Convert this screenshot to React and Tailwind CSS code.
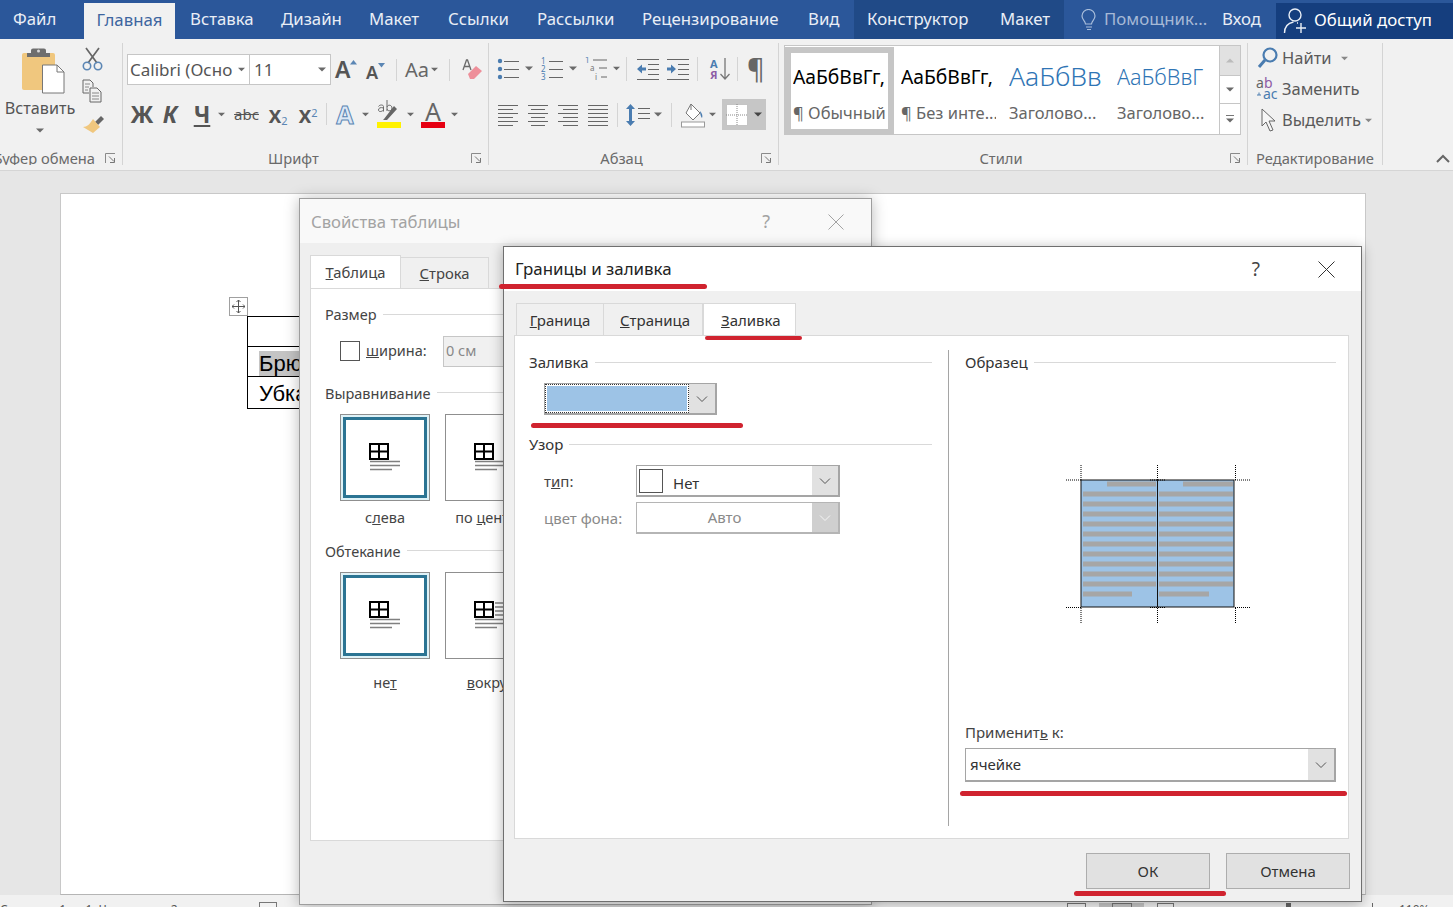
import React from "react";

const Caret = ({ c = "#6a6a6a", w = 8 }) => (
  <svg width={w} height="5" viewBox="0 0 8 5" className="shrink-0"><path d="M0 0.5h8L4 4.5z" fill={c} /></svg>
);
const Chev = ({ c = "#555" }) => (
  <svg width="12" height="8" viewBox="0 0 12 8"><path d="M1 1.5l5 5 5-5" fill="none" stroke={c} strokeWidth="1" /></svg>
);
const Launcher = () => (
  <svg width="11" height="11" viewBox="0 0 11 11" className="shrink-0"><path d="M0.5 10V0.5H10" fill="none" stroke="#8a8a8a" /><path d="M4 3.5l5 5M9.5 5v4.5H5" fill="none" stroke="#777" /></svg>
);
const Sep = ({ h = 25, ml = 0, mr = 0 }) => (
  <div className="w-px bg-[#d4d4d4] shrink-0" style={{ height: h, marginLeft: ml, marginRight: mr }} />
);

function GroupLabel({ children }) {
  return (
    <div className="mt-auto h-[14px] flex items-center text-[14.7px] text-[#6a6a6a] leading-none">
      <span className="flex-1 text-center whitespace-nowrap">{children}</span>
      <span className="w-[24px] flex items-center justify-end pr-[6px]"><Launcher /></span>
    </div>
  );
}

function TabBar() {
  return (
    <div className="h-[39px] bg-[#2b579a] flex text-[16.8px] text-[#e9eef6] leading-none whitespace-nowrap">
      <div className="w-[84px] pl-[13px] flex items-center">Файл</div>
      <div className="w-[91px] mt-[3px] bg-[#f1f1f1] text-[#3d659f] flex items-center justify-center pb-[1px]">Главная</div>
      <div className="w-[15px]" />
      {[["Вставка", 91], ["Дизайн", 88], ["Макет", 79], ["Ссылки", 89], ["Рассылки", 105], ["Рецензирование", 166], ["Вид", 46]].map(([t, w]) => (
        <div key={t} className="flex items-center" style={{ width: w }}>{t}</div>
      ))}
      <div className="w-[210px] bg-[#204a87] flex items-center pl-[13px]">
        <span className="w-[133px]">Конструктор</span><span>Макет</span>
      </div>
      <div className="w-[17px]" />
      <svg width="16" height="24" viewBox="0 0 16 24" className="mt-[9px] mr-[7px]"><path d="M4.5 15c0-3-3.5-4-3.500-8a6.500 6.500 0 0 1 13 0c0 4-3.500 5-3.500 8z" fill="none" stroke="#a9bedb" strokeWidth="1.200" /><path d="M5 18h6M6 20.500h4" stroke="#a9bedb" strokeWidth="1.200" /></svg>
      <div className="w-[118px] text-[#a6b9d6] flex items-center">Помощник...</div>
      <div className="w-[54px] flex items-center">Вход</div>
      <div className="flex-1 mt-[3px] bg-[#153e7e] flex items-center pl-[7px] pb-[1px] text-white">
        <svg width="26" height="28" viewBox="0 0 26 28" className="mr-[5px]"><circle cx="12" cy="8" r="6" fill="none" stroke="#e9eef6" strokeWidth="1.400" /><path d="M1.500 26c0-7 4-10 9-11M14 16h1" fill="none" stroke="#e9eef6" strokeWidth="1.400" /><path d="M18 16v10M13 21h10" stroke="#e9eef6" strokeWidth="1.400" /></svg>
        Общий доступ
      </div>
    </div>
  );
}

function Clipboard() {
  return (
    <div className="w-[123px] shrink-0 border-r border-[#d4d4d4] flex flex-col overflow-hidden">
      <div className="flex">
        <div className="w-[80px] flex flex-col items-center pt-[5px]">
          <svg width="44" height="46" viewBox="0 0 44 46" className="ml-[6px]">
            <rect x="1" y="5" width="33" height="37" rx="2" fill="#f0c77e" />
            <path d="M10 5V2.500a2 2 0 0 1 2-2h11a2 2 0 0 1 2 2V5h4v4H6V5z" fill="#6e6e6e" />
            <circle cx="17.500" cy="3" r="1.500" fill="#d9d9d9" />
            <path d="M21.500 17H36l7 7v21H21.500z" fill="#fff" stroke="#777" />
            <path d="M36 17v7h7" fill="none" stroke="#777" />
          </svg>
          <div className="text-[16.2px] leading-none text-[#555] mt-[6px]">Вставить</div>
          <div className="mt-[12px]"><Caret /></div>
        </div>
        <div className="flex flex-col pl-[1px] pt-[4px]">
          <svg width="24" height="24" viewBox="0 0 24 24"><path d="M5 1l11 15M18 1L7 16" stroke="#666" strokeWidth="1.700" fill="none" /><circle cx="6" cy="19" r="3.700" fill="none" stroke="#5b86b4" strokeWidth="1.600" /><circle cx="17" cy="19" r="3.700" fill="none" stroke="#5b86b4" strokeWidth="1.600" /></svg>
          <svg width="24" height="24" viewBox="0 0 24 24" className="mt-[8px]"><path d="M2 1h7l3 3v4M2 1v13h6" fill="none" stroke="#666" /><path d="M4 5h5M4 8h4M4 11h3" stroke="#888" /><path d="M9 9h7l4 4v10H9z" fill="#f1f1f1" stroke="#666" /><path d="M11 14h7M11 17h7M11 20h7" stroke="#888" /></svg>
          <svg width="24" height="24" viewBox="0 0 24 24" className="mt-[9px]"><path d="M14 10l6-6 3 3-6 6z" fill="#666" /><path d="M12 7l7 8-7 6-10-6c4 0 7-3 10-8z" fill="#f0c77e" /></svg>
        </div>
      </div>
      <div className="mt-auto h-[14px] flex items-center justify-end text-[14.7px] leading-none text-[#6a6a6a] pr-[6px] gap-[10px] whitespace-nowrap">
        <span className="shrink-0">Буфер обмена</span><Launcher />
      </div>
    </div>
  );
}

function FontGroup() {
  return (
    <div className="w-[366px] shrink-0 border-r border-[#d4d4d4] flex flex-col">
      <div className="pl-[4px] pt-[11px] flex items-center h-[42px]">
        <div className="w-[123px] h-[31px] bg-white border border-[#c6c6c6] flex items-center pl-[2px] pr-[4px] justify-between text-[17px] text-[#555] whitespace-nowrap overflow-hidden">
          <span className="pt-[1px]">Calibri (Осно</span><Caret w={7} />
        </div>
        <div className="w-[81px] h-[31px] bg-white border border-[#c6c6c6] border-l-0 flex items-center pl-[4px] pr-[4px] justify-between text-[17px] text-[#555]">
          <span className="pt-[1px]">11</span><Caret />
        </div>
        <div className="w-[32px] ml-[4px] text-[23px] font-semibold text-[#555] leading-none flex items-end">A<svg width="8" height="5" className="mb-[16px]" viewBox="0 0 8 5"><path d="M0 4.500h7L3.500 0z" fill="#5b86b4" /></svg></div>
        <div className="w-[25px] text-[18px] font-semibold text-[#555] leading-none flex items-end ml-[-1px] mt-[4px]">A<svg width="8" height="5" viewBox="0 0 8 5" className="mb-[13px]"><path d="M0 0h7L3.500 4.500z" fill="#5b86b4" /></svg></div>
        <Sep h={22} ml={5} mr={8} />
        <div className="flex items-center gap-[2px] text-[20px] text-[#666] w-[36px] leading-none">Aa<Caret w={7} /></div>
        <Sep h={22} ml={8} mr={12} />
        <svg width="22" height="22" viewBox="0 0 22 22"><path d="M1 11L4.500 1h1L9 11M2.500 7.500h5" fill="none" stroke="#6a6a6a" strokeWidth="1.300" /><path d="M6 15l8-8 6 5-8 8H8z" fill="#ee8f9a" /></svg>
      </div>
      <div className="pl-[4px] mt-[14px] flex items-center h-[30px] text-[#555]">
        <span className="w-[30px] text-center text-[23px] font-bold leading-none">Ж</span>
        <span className="w-[26px] text-center text-[23px] font-bold italic leading-none">К</span>
        <span className="w-[38px] text-center text-[23px] font-bold leading-none underline decoration-[1.5px] underline-offset-[2px]">Ч</span>
        <span className="-ml-[3px] mr-[9px]"><Caret w={7} /></span>
        <span className="w-[25px] text-center text-[15px] line-through leading-none">abc</span>
        <span className="w-[34px] ml-[2px] text-[23px] font-semibold leading-none text-center">x<sub className="text-[11px] font-normal text-[#5b86b4]">2</sub></span>
        <span className="w-[26px] text-[23px] font-semibold leading-none text-center">x<sup className="text-[11px] font-normal text-[#5b86b4]">2</sup></span>
        <Sep h={22} ml={5} mr={8} />
        <span className="w-[20px] text-center text-[25px] leading-none text-[#dbe8f6] [-webkit-text-stroke:1px_#5b86b4] font-bold">A</span>
        <span className="ml-[7px] mr-[8px]"><Caret w={7} /></span>
        <div className="flex flex-col items-center w-[24px]">
          <svg width="24" height="22" viewBox="0 0 24 22"><path d="M1.500 6.500c1-2 5-2 5 0v5M6.500 8c-3-1-5 0-5 2s3 2 5 0M10 0v11M10 7c1-3 5-2 5 1s-4 4-5 1" fill="none" stroke="#6a6a6a" /><path d="M7 19l10-13 3 3-10 11H6z" fill="#666" /></svg>
          <div className="w-[24px] h-[6px] bg-[#fff200]" />
        </div>
        <span className="ml-[6px] mr-[7px]"><Caret w={7} /></span>
        <div className="flex flex-col items-center w-[24px]">
          <span className="text-[25px] leading-[22px] text-[#666]">A</span>
          <div className="w-[24px] h-[6px] bg-[#e60012]" />
        </div>
        <span className="ml-[6px]"><Caret w={7} /></span>
      </div>
      <GroupLabel>Шрифт</GroupLabel>
    </div>
  );
}

function ParagraphGroup() {
  const dash = (ys, x, w) => ys.map((y) => <rect key={y} x={x} y={y} width={w} height="1" fill="#666" />);
  return (
    <div className="w-[290px] shrink-0 border-r border-[#d4d4d4] flex flex-col">
      <div className="pl-[8px] pt-[10px] flex items-center h-[41px]">
        <svg width="22" height="24" viewBox="0 0 22 24"><circle cx="3" cy="4" r="2.200" fill="#4a7cb0" /><circle cx="3" cy="12" r="2.200" fill="#4a7cb0" /><circle cx="3" cy="20" r="2.200" fill="#4a7cb0" />{dash([4, 12, 20], 7, 15)}</svg>
        <span className="ml-[6px] mr-[8px]"><Caret /></span>
        <svg width="22" height="24" viewBox="0 0 22 24"><g fontSize="8" fill="#4a7cb0" fontFamily="Noto Sans"><text x="0" y="7">1</text><text x="0" y="15">2</text><text x="0" y="23">3</text></g>{dash([4, 12, 20], 8, 14)}</svg>
        <span className="ml-[6px] mr-[8px]"><Caret /></span>
        <svg width="24" height="24" viewBox="0 0 24 24"><g fontSize="8" fill="#4a7cb0" fontFamily="Noto Sans"><text x="0" y="6">1</text><text x="5" y="14" fill="#777">a</text><text x="10" y="23" fill="#777">i</text></g><path d="M8 3h14M14 11h8M16 20h6" stroke="#666" /></svg>
        <span className="ml-[4px] mr-[6px]"><Caret w={7} /></span>
        <Sep h={24} mr={10} />
        <svg width="23" height="24" viewBox="0 0 23 24">{dash([2, 22], 0, 22)}{dash([7, 12, 17], 11, 11)}<path d="M0 12l5-4.500v3h4v3H5v3z" fill="#4a7cb0" /></svg>
        <svg width="23" height="24" viewBox="0 0 23 24" className="ml-[7px]">{dash([2, 22], 0, 22)}{dash([7, 12, 17], 11, 11)}<path d="M9 12L4 7.500v3H0v3h4v3z" fill="#4a7cb0" /></svg>
        <Sep h={24} ml={7} mr={11} />
        <svg width="22" height="24" viewBox="0 0 22 24"><text x="1" y="11" fontSize="11" fontWeight="700" fill="#4a7cb0" fontFamily="Noto Sans">А</text><text x="1" y="22" fontSize="11" fontWeight="700" fill="#8d5ca6" fontFamily="Noto Sans">Я</text><path d="M16 1v21M11.500 17l4.500 5 4.500-5" fill="none" stroke="#777" strokeWidth="1.300" /></svg>
        <Sep h={24} ml={6} mr={9} />
        <span className="text-[27px] leading-none text-[#666]">¶</span>
      </div>
      <div className="pl-[9px] mt-[15px] flex items-center h-[31px]">
        <svg width="20" height="24" viewBox="0 0 20 24">{[2, 6, 10, 14, 18, 22].map((y, i) => <rect key={y} x="0" y={y} width={i % 2 ? 15 : 20} height="1" fill="#666" />)}</svg>
        <svg width="20" height="24" viewBox="0 0 20 24" className="ml-[10px]">{[2, 6, 10, 14, 18, 22].map((y, i) => <rect key={y} x={i % 2 ? 3 : 0} y={y} width={i % 2 ? 14 : 20} height="1" fill="#666" />)}</svg>
        <svg width="20" height="24" viewBox="0 0 20 24" className="ml-[10px]">{[2, 6, 10, 14, 18, 22].map((y, i) => <rect key={y} x={i % 2 ? 5 : 0} y={y} width={i % 2 ? 15 : 20} height="1" fill="#666" />)}</svg>
        <svg width="20" height="24" viewBox="0 0 20 24" className="ml-[10px]">{[2, 6, 10, 14, 18, 22].map((y) => <rect key={y} x="0" y={y} width="20" height="1" fill="#666" />)}</svg>
        <Sep h={24} ml={9} mr={8} />
        <svg width="24" height="24" viewBox="0 0 24 24"><path d="M4.500 1l4.500 5H6v12h3l-4.500 5L0 18h3V6H0z" fill="#4a7cb0" />{dash([5, 10, 15], 12, 12)}</svg>
        <span className="ml-[4px] mr-[9px]"><Caret /></span>
        <Sep h={24} mr={9} />
        <svg width="24" height="26" viewBox="0 0 24 26"><path d="M10 2l9 9-7 7-7-7z" fill="#fff" stroke="#777" /><path d="M10 2v6" stroke="#777" /><path d="M19 9c2 2 3 5 2 7-1-1-2-4-2-7z" fill="#4a7cb0" /><rect x="0.500" y="20" width="23" height="5" fill="#fff" stroke="#999" /></svg>
        <span className="ml-[4px] mr-[6px]"><Caret w={7} /></span>
        <div className="w-[44px] h-[31px] bg-[#c6c6c6] flex items-center pl-[4px] gap-[6px]">
          <svg width="22" height="22" viewBox="0 0 22 22"><rect x="0" y="0" width="22" height="22" fill="#fff" /><path d="M0.500 0.500h21v21h-21zM11 0v22M0 11h22" fill="none" stroke="#888" strokeDasharray="1 1" /></svg>
          <Caret c="#444" />
        </div>
      </div>
      <GroupLabel>Абзац</GroupLabel>
    </div>
  );
}

function StyleItem({ sample, name, cls, wrap }) {
  return (
    <div className={wrap}>
      <div className={`h-[44px] flex items-center overflow-hidden whitespace-nowrap leading-none pt-[1px] ${cls}`}>{sample}</div>
      <div className="text-[16.5px] leading-none text-[#666] whitespace-nowrap mt-[7px] overflow-hidden">{name}</div>
    </div>
  );
}

function StylesGroup() {
  return (
    <div className="w-[469px] shrink-0 border-r border-[#d4d4d4] flex flex-col">
      <div className="pl-[5px] pt-[2px]">
        <div className="w-[457px] h-[90px] bg-white border border-[#c6c6c6] flex">
          <div className="w-[109px] h-[88px] border-[6px] border-[#c6c6c6] pl-[2px] pt-[1px] overflow-hidden -mr-[1px] mt-[1px]">
            <div className="h-[44px] flex items-center overflow-hidden whitespace-nowrap leading-none pt-[1px] text-[19.3px] text-black">АаБбВвГг,</div>
            <div className="text-[16.5px] leading-none text-[#666] whitespace-nowrap mt-[7px] overflow-hidden">¶ Обычный</div>
          </div>
          <StyleItem wrap="w-[95px] ml-[8px] pt-[8px] overflow-hidden" cls="text-[19.3px] text-black" sample="АаБбВвГг," name="¶ Без инте..." />
          <StyleItem wrap="w-[92px] ml-[13px] pt-[8px] overflow-hidden" cls="text-[26.5px] text-[#2f75b5] font-light" sample="АаБбВвГ" name="Заголово..." />
          <StyleItem wrap="w-[92px] ml-[16px] pt-[8px] overflow-hidden" cls="text-[21.5px] text-[#2f75b5] font-light" sample="АаБбВвГ" name="Заголово..." />
          <div className="w-[21px] ml-auto border-l border-[#c6c6c6] flex flex-col">
            <div className="h-[30px] bg-[#e1e1e1] border-b border-[#c6c6c6] flex items-center justify-center"><svg width="8" height="5" viewBox="0 0 8 5"><path d="M0 4.500h8L4 .5z" fill="#bbb" /></svg></div>
            <div className="h-[28px] border-b border-[#c6c6c6] flex items-center justify-center"><Caret /></div>
            <div className="flex-1 flex flex-col items-center justify-center gap-[2px]"><div className="w-[8px] h-px bg-[#777]" /><Caret /></div>
          </div>
        </div>
      </div>
      <GroupLabel>Стили</GroupLabel>
    </div>
  );
}

function EditGroup() {
  return (
    <div className="w-[135px] shrink-0 border-r border-[#d4d4d4] flex flex-col text-[16.500px] text-[#5a5a5a] leading-none">
      <div className="pl-[8px] pt-[4px] flex flex-col gap-[9px] whitespace-nowrap">
        <div className="flex items-center h-[22px]">
          <svg width="22" height="22" viewBox="0 0 22 22" className="ml-[1px] mr-[3px]"><circle cx="13" cy="8" r="6.500" fill="none" stroke="#4a7cb0" strokeWidth="2.200" /><path d="M8 13l-6 7" stroke="#4a7cb0" strokeWidth="3" /></svg>
          <span>Найти</span><span className="ml-[9px]"><Caret w={7} c="#888" /></span>
        </div>
        <div className="flex items-center h-[22px]">
          <svg width="26" height="26" viewBox="0 0 26 26"><text x="0" y="12" fontSize="14" fontFamily="Noto Sans" fill="#666">a</text><text x="8" y="12" fontSize="14" fontFamily="Noto Sans" fill="#8d5ca6">b</text><text x="7" y="23" fontSize="14" fontFamily="Noto Sans" fill="#4a7cb0">ac</text><path d="M1 19h4M3 16.500v2.500" stroke="#4a7cb0" /></svg>
          <span>Заменить</span>
        </div>
        <div className="flex items-center h-[22px]">
          <svg width="20" height="24" viewBox="0 0 20 24" className="ml-[4px] mr-[2px]"><path d="M2 1v17l4-4 4 9 3-1-4-9h6z" fill="#f6f6f6" stroke="#666" /></svg>
          <span>Выделить</span><span className="ml-[4px]"><Caret w={7} c="#888" /></span>
        </div>
      </div>
      <div className="mt-auto h-[14px] flex items-center justify-center text-[14.7px] text-[#6a6a6a] whitespace-nowrap">Редактирование</div>
    </div>
  );
}

function Ribbon() {
  return (
    <div className="h-[132px] bg-[#f1f1f1] border-b border-[#d5d5d5] flex pt-[4px] pb-[5px]">
      <Clipboard /><FontGroup /><ParagraphGroup /><StylesGroup /><EditGroup />
      <div className="flex-1 flex items-end justify-end pr-[3px] pb-[2px]">
        <svg width="14" height="9" viewBox="0 0 14 9"><path d="M1 8l6-6 6 6" fill="none" stroke="#666" strokeWidth="2" /></svg>
      </div>
    </div>
  );
}

function Document() {
  return (
    <div className="h-[724px] bg-[#e6e6e6] pt-[22px] pl-[60px]">
      <div className="w-[1306px] h-[702px] bg-white border border-[#c8c8c8] border-b-[#b5b5b5] pl-[168px] pt-[103px]">
        <div className="w-[19px] h-[19px] border border-[#a0a0a0] flex items-center justify-center">
          <svg width="13" height="13" viewBox="0 0 13 13"><path d="M6.500 0v13M0 6.500h13" stroke="#555" /><path d="M4.500 2l2-2 2 2M4.500 11l2 2 2-2M2 4.500l-2 2 2 2M11 4.500l2 2-2 2" fill="none" stroke="#555" /></svg>
        </div>
        <div className="ml-[18px] w-[200px] border border-black text-[22px] leading-none text-black" style={{ fontFamily: "'Liberation Sans', sans-serif" }}>
          <div className="h-[30px] border-b border-black" />
          <div className="h-[30px] border-b border-black pl-[11px] flex items-center pt-[4px]"><span className="bg-[#c4c4c4] h-[25px] flex items-center">Брюки</span></div>
          <div className="h-[31px] pl-[11px] flex items-center pt-[3px]">Убка</div>
        </div>
      </div>
    </div>
  );
}

function StatusBar() {
  return (
    <div className="h-[12px] bg-[#f1f1f1] flex items-start overflow-hidden text-[12px] leading-none text-[#555]">
      <span className="w-[259px] mt-[9px] whitespace-nowrap">Страница 1 из 1&nbsp;&nbsp;Число слов: 2</span>
      <div className="w-[18px] h-[8px] mt-[7px] border border-[#777]" />
      <div className="flex-1" />
      <div className="w-[19px] h-[8px] mt-[8px] border border-[#777]" />
      <div className="w-[45px] h-[8px] ml-[13px] mt-[8px] bg-[#c6c6c6] flex justify-center"><div className="w-[20px] h-[8px] border border-[#777]" /></div>
      <div className="w-[17px] h-[8px] ml-[13px] mt-[8px] border border-[#777]" />
      <div className="w-[5px] h-[8px] ml-[112px] mt-[8px] bg-[#666]" />
      <div className="w-px h-[8px] ml-[81px] mt-[8px] bg-[#666]" />
      <span className="w-[80px] pl-[26px] mt-[9px]">110%</span>
    </div>
  );
}

const Tile = ({ active, lines }) => (
  <div className="w-[90px] shrink-0 flex flex-col">
    <div className={`w-[90px] h-[87px] border border-[#8f8f8f] flex items-center justify-center ${active ? "p-[2px] bg-[#dff2f7]" : "bg-white"}`}>
      <div className={`w-full h-full flex items-center justify-center bg-white ${active ? "border-[3px] border-[#2b7493]" : ""}`}>
        <svg width="32" height="30" viewBox="0 0 32 30">
          <path d="M1 1h18v15H1zM10 1v15M1 8.500h18" fill="none" stroke="#000" strokeWidth="2" />
          {lines}
          <path d="M1 18.500h30M1 22.500h30M1 26.500h22" stroke="#808080" strokeWidth="1.600" />
        </svg>
      </div>
    </div>
  </div>
);

const Legend = ({ children, cls = "" }) => (
  <div className={`flex items-center gap-[6px] leading-none whitespace-nowrap ${cls}`}>
    <span>{children}</span><div className="flex-1 h-px bg-[#d9d9d9]" />
  </div>
);

function TableProps() {
  return (
    <div className="absolute left-[299px] top-[198px] w-[573px] h-[707px] bg-[#efefef] border border-[#9d9d9d] shadow-[0_1px_14px_rgba(0,0,0,0.28)] text-[#555]">
      <div className="h-[44px] bg-[#f9f9f9] flex items-center pl-[11px] pr-[27px] pt-[1px] text-[16.7px] text-[#a3a3a3]">
        <span className="flex-1">Свойства таблицы</span>
        <span className="text-[18px] mr-[58px]">?</span>
        <svg width="16" height="16" viewBox="0 0 16 16"><path d="M0.500 0.500l15 15M15.500 0.500l-15 15" stroke="#a3a3a3" /></svg>
      </div>
      <div className="h-[45px] flex items-end pl-[10px] text-[14.8px]">
        <div className="w-[91px] h-[33px] bg-white border border-[#d9d9d9] border-b-0 flex items-center justify-center text-[#444]"><span><u>Т</u>аблица</span></div>
        <div className="w-[88px] h-[31px] bg-[#f0f0f0] border-r border-t border-[#d9d9d9] flex items-center justify-center text-[#444]"><span><u>С</u>трока</span></div>
      </div>
      <div className="ml-[10px] w-[560px] h-[553px] bg-white border border-[#d9d9d9] pl-[14px] pt-[18px] text-[14.500px] text-[#444]">
        <Legend>Размер</Legend>
        <div className="flex items-center mt-[14px] pl-[15px] h-[31px]">
          <div className="w-[20px] h-[20px] border border-[#555]" />
          <span className="ml-[6px] w-[77px]"><u>ш</u>ирина:</span>
          <div className="w-[100px] h-[31px] bg-[#f0f0f0] border border-[#c6c6c6] pl-[2px] flex items-center text-[#888]">0 см</div>
        </div>
        <Legend cls="mt-[19px]">Выравнивание</Legend>
        <div className="flex gap-[15px] mt-[14px] pl-[15px]">
          <Tile active lines={null} />
          <Tile lines={null} />
        </div>
        <div className="flex gap-[15px] mt-[9px] pl-[15px] leading-none">
          <span className="w-[90px] text-center">с<u>л</u>ева</span>
          <span className="w-[90px] text-center whitespace-nowrap">по <u>ц</u>ентру</span>
        </div>
        <Legend cls="mt-[19px]">Обтекание</Legend>
        <div className="flex gap-[15px] mt-[14px] pl-[15px]">
          <Tile active lines={null} />
          <Tile lines={<path d="M21 2h10M21 6h10M21 10h10M21 14h10" stroke="#808080" strokeWidth="1.600" />} />
        </div>
        <div className="flex gap-[15px] mt-[16px] pl-[15px] leading-none">
          <span className="w-[90px] text-center">не<u>т</u></span>
          <span className="w-[90px] text-center whitespace-nowrap"><u>в</u>округ</span>
        </div>
      </div>
    </div>
  );
}

const ComboBtn = ({ cls = "", c }) => (
  <div className={`w-[26px] shrink-0 self-stretch flex items-center justify-center ${cls}`}><Chev c={c} /></div>
);

function Preview() {
  const ys = [489, 499, 509, 519, 529, 539, 549, 559, 569, 579];
  return (
    <svg width="186" height="160" viewBox="1065 464 186 160">
      <rect x="1081" y="480" width="153" height="127" fill="#9dc3e6" />
      <g fill="#a6a6a6">
        <rect x="1107" y="481.500" width="49" height="5" /><rect x="1183" y="481.500" width="50" height="5" />
        {ys.map((y) => <g key={y}><rect x="1083" y={y + 2.500} width="73" height="5" /><rect x="1159" y={y + 2.500} width="74" height="5" /></g>)}
        <rect x="1083" y="591.500" width="49" height="5" /><rect x="1159" y="591.500" width="50" height="5" />
      </g>
      <rect x="1081" y="480" width="153" height="127" fill="none" stroke="#111" />
      <path d="M1157.500 480v127" stroke="#111" />
      <path d="M1066 480h15M1081 465v15M1150 480h15M1157.500 465v15M1235 480h15M1235.500 465v15M1066 607.500h15M1081 608v15M1150 607.500h15M1157.500 608v15M1235 607.500h15M1235.500 608v15" stroke="#000" strokeDasharray="1 1" fill="none" />
    </svg>
  );
}

function Borders() {
  return (
    <div className="absolute left-[503px] top-[246px] w-[859px] h-[656px] bg-[#f0f0f0] border border-[#6f6f6f] shadow-[0_2px_12px_rgba(0,0,0,0.3)] text-[15px] text-[#333] flex flex-col">
      <div className="h-[44px] bg-white flex items-center pl-[11px] pr-[26px] shrink-0">
        <span className="flex-1 text-[16.9px] text-[#222]">Границы и заливка</span>
        <span className="text-[19px] mr-[58px] text-[#444]">?</span>
        <svg width="17" height="17" viewBox="0 0 17 17"><path d="M0.500 0.500l16 16M16.500 0.500l-16 16" stroke="#333" /></svg>
      </div>
      <div className="h-[44px] flex items-end pl-[12px] shrink-0">
        <div className="w-[88px] h-[32px] bg-[#f0f0f0] border-l border-t border-r border-[#d9d9d9] flex items-center justify-center pt-[1px]"><span><u>Г</u>раница</span></div>
        <div className="w-[99px] h-[32px] bg-[#f0f0f0] border-t border-r border-[#d9d9d9] flex items-center pl-[16px] pt-[1px]"><span><u>С</u>траница</span></div>
        <div className="w-[93px] h-[33px] bg-white border-x border-t border-[#d9d9d9] flex items-center pl-[17px] -mb-[1px]"><span><u>З</u>аливка</span></div>
      </div>
      <div className="ml-[10px] w-[835px] h-[504px] bg-white border border-[#d9d9d9] flex shrink-0">
        <div className="w-[433px] shrink-0 pl-[14px] pr-[16px] pt-[19px]">
          <Legend>Заливка</Legend>
          <div className="ml-[15px] mt-[13px] w-[173px] h-[32px] border border-[#a5a5a5] border-r-2 border-b-2 flex">
            <div className="flex-1 border border-dotted border-[#333] p-[1px]"><div className="w-full h-full bg-[#9dc3e6]" /></div>
            <ComboBtn cls="bg-[#e1e1e1]" />
          </div>
          <Legend cls="mt-[22px]">Узор</Legend>
          <div className="flex items-center mt-[13px] pl-[15px]">
            <span className="w-[92px] text-[#444]">т<u>и</u>п:</span>
            <div className="w-[204px] h-[32px] border border-[#a5a5a5] border-r-2 border-b-2 flex items-center pl-[2px]">
              <div className="w-[24px] h-[24px] border border-[#555] shrink-0" />
              <span className="ml-[10px] mt-[5px] flex-1 leading-none">Нет</span>
              <ComboBtn cls="bg-[#e1e1e1]" />
            </div>
          </div>
          <div className="flex items-center mt-[5px] pl-[15px] text-[#8a8a8a]">
            <span className="w-[92px]">цвет фона:</span>
            <div className="w-[204px] h-[32px] border border-[#b5b5b5] border-r-2 border-b-2 flex items-center">
              <span className="flex-1 text-center">Авто</span>
              <ComboBtn cls="bg-[#cfcfcf]" c="#f5f5f5" />
            </div>
          </div>
        </div>
        <div className="w-px h-[476px] mt-[14px] bg-[#a5a5a5] shrink-0" />
        <div className="flex-1 pl-[16px] pr-[12px] pt-[19px] flex flex-col">
          <Legend>Образец</Legend>
          <div className="mt-[94px] ml-[100px] h-[160px]"><Preview /></div>
          <div className="mt-[101px] leading-none text-[#444]">Применит<u>ь</u> к:</div>
          <div className="mt-[8px] h-[34px] border border-[#a5a5a5] border-r-2 border-b-2 flex items-center pl-[4px]">
            <span className="flex-1">ячейке</span>
            <ComboBtn cls="bg-[#e1e1e1]" />
          </div>
        </div>
      </div>
      <div className="flex justify-end gap-[16px] pr-[11px] pt-[14px]">
        <div className="w-[124px] h-[36px] bg-[#e1e1e1] border border-[#adadad] flex items-center justify-center">ОК</div>
        <div className="w-[124px] h-[36px] bg-[#e1e1e1] border border-[#adadad] flex items-center justify-center">Отмена</div>
      </div>
    </div>
  );
}

const Mark = ({ cls }) => <div className={`absolute bg-[#d0232f] rounded-full ${cls}`} />;

export default function App() {
  return (
    <div className="relative w-[1453px] h-[907px] overflow-hidden bg-[#e6e6e6]" style={{ fontFamily: "'Noto Sans', 'Open Sans', sans-serif" }}>
      <TabBar />
      <Ribbon />
      <Document />
      <StatusBar />
      <TableProps />
      <Borders />
      <Mark cls="left-[499px] top-[284px] w-[208px] h-[5px]" />
      <Mark cls="left-[705px] top-[336px] w-[97px] h-[4px]" />
      <Mark cls="left-[531px] top-[423px] w-[212px] h-[5px]" />
      <Mark cls="left-[960px] top-[791px] w-[387px] h-[5px]" />
      <Mark cls="left-[1074px] top-[891px] w-[152px] h-[5px]" />
    </div>
  );
}
